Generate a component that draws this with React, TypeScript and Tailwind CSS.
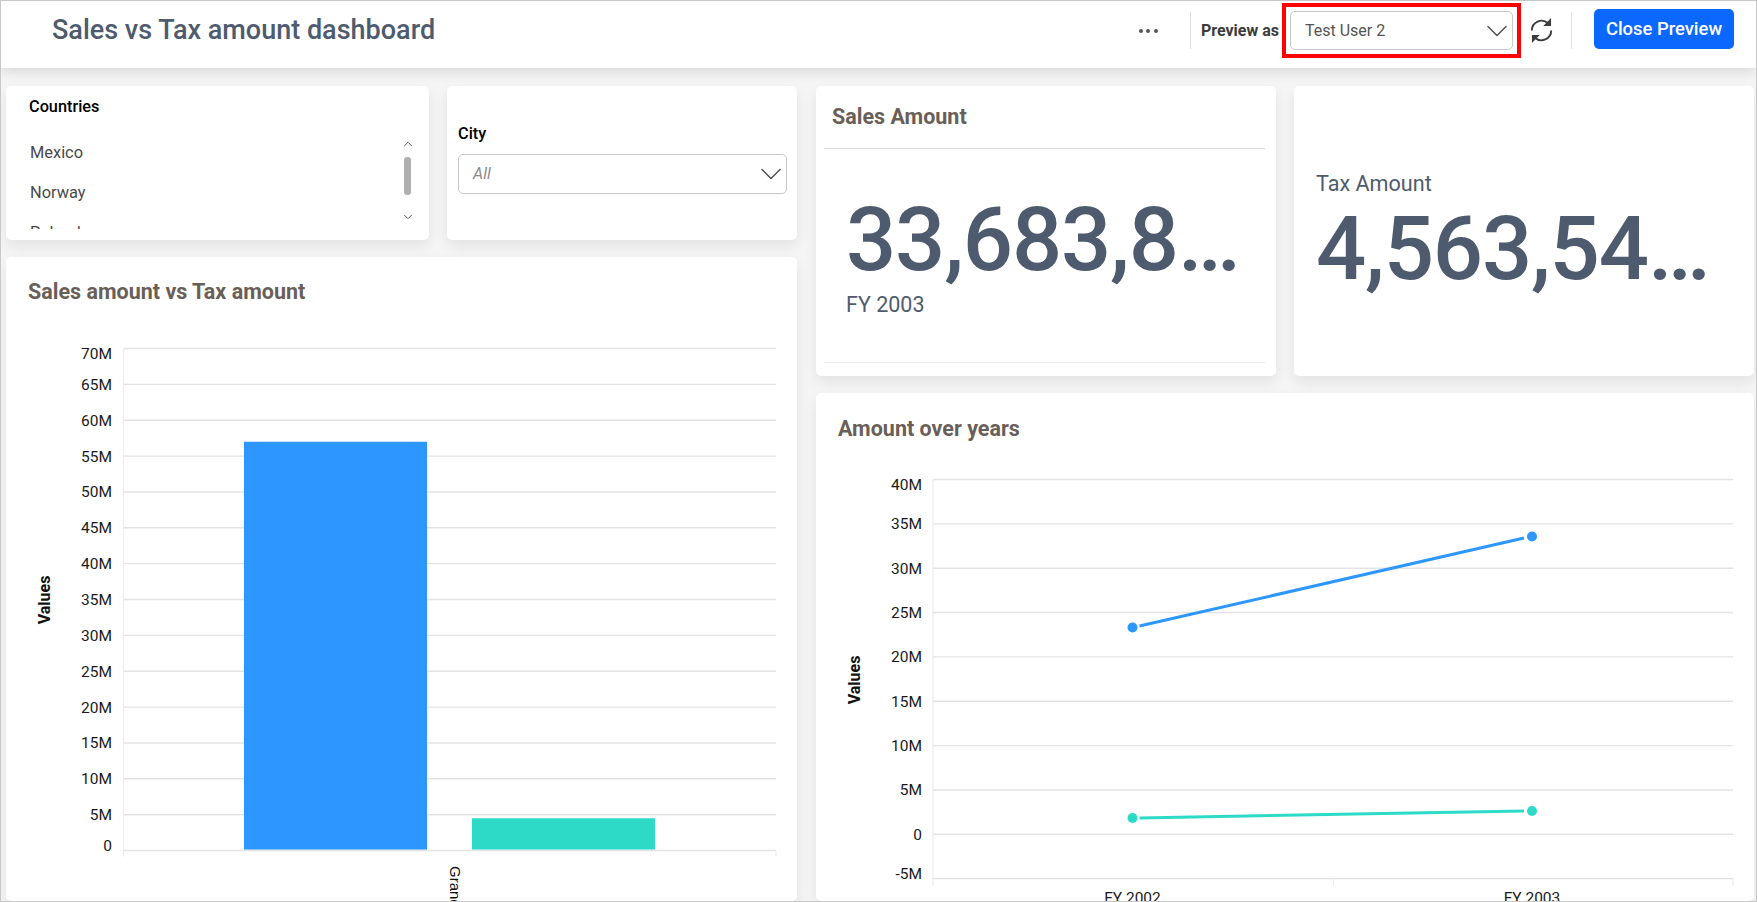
import React from 'react';
import { ChevronDown, ChevronUp } from 'lucide-react';

const BLUE = '#2d97ff';
const TEAL = '#2ddac7';
const GRID = '#e3e3e3';
const AXIS = '#ececec';

const Card: React.FC<{ className?: string; children?: React.ReactNode }> = ({ className = '', children }) => (
  <div className={`bg-white rounded-[5px] shadow-[0_6px_14px_rgba(0,0,0,0.08)] overflow-hidden ${className}`}>{children}</div>
);

const SyncIcon = () => (
  <svg width="27" height="27" viewBox="0 0 24 24" fill="none" stroke="#3c3c3c" strokeWidth="1.7">
    <path d="M3.4 12a8.6 8.6 0 0 1 14.6-6.2" />
    <path d="M20.6 12a8.6 8.6 0 0 1-14.6 6.2" />
    <path d="M20 2.2v5.2h-5.2z" fill="#3c3c3c" strokeWidth="1" />
    <path d="M4 21.8v-5.2h5.2z" fill="#3c3c3c" strokeWidth="1" />
  </svg>
);

const Select: React.FC<{ label: string; className?: string; labelClass?: string }> = ({ label, className = '', labelClass = '' }) => (
  <div className={`flex items-center justify-between bg-white border border-[#c8c8c8] rounded-[5px] ${className}`}>
    <span className={labelClass}>{label}</span>
    <ChevronDown size={36} strokeWidth={1} color="#505050" className="shrink-0 -mr-[3px]" />
  </div>
);

// first and last label stay inside the plot, the others sit on their line
const labelY = (y: number, first: boolean, last: boolean) => y + 5.5 + (first ? 4.5 : 0) - (last ? 5 : 0);

// sales vs tax bars
const BarChart = () => {
  const ticks = Array.from({ length: 15 }, (_, i) => i * 5);
  const top = 91.5;
  const step = 35.86;
  const y = (v: number) => top + (70 - v) / 5 * step;
  return (
    <svg width="791" height="645" className="block">
      <text x="-343" y="44" transform="rotate(-90)" textAnchor="middle" fontSize="16" fontWeight="700" fill="#111">Values</text>
      {ticks.map((t) => (
        <g key={t}>
          <line x1="117.5" x2="770" y1={y(t)} y2={y(t)} stroke={GRID} strokeWidth="1.4" />
          <text x="106" y={labelY(y(t), t === 70, t === 0)} textAnchor="end" fontSize="15.5" fill="#1a1a1a">{t === 0 ? '0' : `${t}M`}</text>
        </g>
      ))}
      <line x1="117.5" x2="117.5" y1={top} y2={y(0) + 6} stroke={AXIS} strokeWidth="1.2" />
      <line x1="770" x2="770" y1={y(0)} y2={y(0) + 6} stroke={AXIS} strokeWidth="1.2" />
      <rect x="238" y={y(57)} width="183" height={y(0) - y(57) - 1} fill={BLUE} />
      <rect x="466" y={y(4.5)} width="183" height={y(0) - y(4.5) - 1} fill={TEAL} />
      <text x="444" y="609" transform="rotate(90 444 609)" fontSize="15" fill="#111" style={{ fontFamily: '"Liberation Sans", sans-serif' }}>Grand Total</text>
    </svg>
  );
};

// amount per fiscal year
const LineChart = () => {
  const ticks = [40, 35, 30, 25, 20, 15, 10, 5, 0, -5];
  const y = (v: number) => 86.5 + (40 - v) / 5 * 44.35;
  return (
    <svg width="938" height="508" className="block">
      <text x="-287" y="44" transform="rotate(-90)" textAnchor="middle" fontSize="16" fontWeight="700" fill="#111">Values</text>
      {ticks.map((t) => (
        <g key={t}>
          <line x1="117" x2="917" y1={y(t)} y2={y(t)} stroke={GRID} strokeWidth="1.4" />
          <text x="106" y={labelY(y(t), t === 40, t === -5)} textAnchor="end" fontSize="15.5" fill="#1a1a1a">{t === 0 ? '0' : `${t}M`}</text>
        </g>
      ))}
      <line x1="117" x2="117" y1={y(40)} y2={y(-5) + 7} stroke={AXIS} strokeWidth="1.2" />
      <line x1="517.5" x2="517.5" y1={y(-5)} y2={y(-5) + 7} stroke={AXIS} strokeWidth="1.2" />
      <line x1="917" x2="917" y1={y(-5)} y2={y(-5) + 7} stroke={AXIS} strokeWidth="1.2" />
      <line x1="323.5" y1="233" x2="708" y2="145" stroke={BLUE} strokeWidth="3" />
      <circle cx="316.5" cy="234.5" r="5" fill={BLUE} />
      <circle cx="716" cy="143.5" r="5" fill={BLUE} />
      <line x1="323.5" y1="425" x2="708" y2="418" stroke={TEAL} strokeWidth="3" />
      <circle cx="316.5" cy="425" r="5" fill={TEAL} />
      <circle cx="716" cy="418" r="5" fill={TEAL} />
      <text x="316.5" y="510" textAnchor="middle" fontSize="15.5" fill="#1a1a1a">FY 2002</text>
      <text x="716" y="510" textAnchor="middle" fontSize="15.5" fill="#1a1a1a">FY 2003</text>
    </svg>
  );
};

const App: React.FC = () => {
  return (
    <div className="w-[1757px] h-[902px] overflow-hidden border border-[#c8c8c8] bg-[#f5f5f6] flex flex-col font-['Roboto',sans-serif]">
      {/* top bar */}
      <header className="h-[67px] shrink-0 bg-white shadow-[0_4px_12px_rgba(0,0,0,0.12)] flex items-center pl-[51px] pr-[22px] relative z-10">
        <h1 className="text-[27px] font-medium text-[#4e5b6e] -mt-[8px]">Sales vs Tax amount dashboard</h1>
        <div className="ml-auto flex items-center h-full pb-[8px]">
          <span className="flex gap-[3.5px] mr-[32px]">
            <i className="w-[4px] h-[4px] rounded-full bg-[#555]" />
            <i className="w-[4px] h-[4px] rounded-full bg-[#555]" />
            <i className="w-[4px] h-[4px] rounded-full bg-[#555]" />
          </span>
          <div className="w-px h-[37px] bg-[#dcdcdc] mr-[10px]" />
          <span className="text-[16px] font-bold text-[#3b3b3b] mr-[3px]">Preview as</span>
          <div className="border-4 border-[#ff0000] px-[4px] py-[4px] w-[239px] h-[55px]">
            <Select label="Test User 2" className="h-full pl-[14px]" labelClass="text-[16px] text-[#555]" />
          </div>
          <div className="ml-[7px] mr-[16px]"><SyncIcon /></div>
          <div className="w-px h-[37px] bg-[#e2e2e2] mr-[22px]" />
          <button className="w-[140px] h-[40px] rounded-[5px] bg-[#0a68ff] text-white text-[18.4px] font-medium -mt-[3px]">Close Preview</button>
        </div>
      </header>

      <main className="flex-1 min-h-0 flex gap-[19px] pl-[5px] pt-[18px]">
        {/* left column */}
        <div className="w-[791px] flex flex-col gap-[17px]">
          <div className="flex gap-[18px] h-[154px] shrink-0">
            <Card className="w-[423px] relative pl-[23px] pt-[9px]">
              <div className="text-[16.3px] leading-[24px] font-medium text-black">Countries</div>
              <div className="mt-[14px] h-[96px] overflow-hidden text-[16.4px] text-[#4a4a4a] pl-px">
                <div className="h-[40px] flex items-center">Mexico</div>
                <div className="h-[40px] flex items-center">Norway</div>
                <div className="h-[40px] flex items-center">Poland</div>
              </div>
              <div className="absolute right-[14.5px] top-[51px] w-[14px] flex flex-col items-center">
                <ChevronUp size={14} strokeWidth={1.6} color="#555" />
                <span className="w-[7px] h-[38px] mt-[6px] rounded-[3px] bg-[#b0b0b0]" />
                <ChevronDown size={14} strokeWidth={1.6} color="#555" className="mt-[14.5px]" />
              </div>
            </Card>
            <Card className="w-[350px] pl-[11px] pr-[10px] pt-[38px]">
              <div className="text-[16.3px] font-medium text-black leading-[20px]">City</div>
              <Select label="All" className="mt-[10px] h-[40px] pl-[14px]" labelClass="text-[16px] italic text-[#8a8a8a]" />
            </Card>
          </div>
          <Card className="flex-1 min-h-0">
            <h2 className="text-[21.5px] font-bold text-[#6a5f58] pl-[22px] pt-[22px] leading-[26px] mb-[-48px]">Sales amount vs Tax amount</h2>
            <BarChart />
          </Card>
        </div>

        {/* right column */}
        <div className="w-[938px] flex flex-col gap-[17px]">
          <div className="flex gap-[18px] h-[290px] shrink-0">
            <Card className="w-[460px] flex flex-col pl-[8px] pr-[11px]">
              <div className="h-[63px] border-b border-[#d9d9d9] pl-[8px] pt-[18px] text-[21.5px] font-bold text-[#6a5f58] leading-[26px] shrink-0">Sales Amount</div>
              <div className="flex-1 border-b border-[#ececec] mb-[13px] pl-[22px] pt-[39px]">
                <div className="text-[88.5px] font-medium tracking-[-1.2px] leading-[105px] text-[#4e5b6e] truncate">33,683,816.00</div>
                <div className="text-[21.5px] text-[#4e5b6e] leading-[26px] -mt-[1px]">FY 2003</div>
              </div>
            </Card>
            <Card className="w-[460px] pl-[22px] pr-[16px] pt-[85px]">
              <div className="text-[21.6px] text-[#4e5b6e] leading-[26px]">Tax Amount</div>
              <div className="text-[88.5px] font-medium tracking-[-1.2px] leading-[105px] text-[#4e5b6e] truncate">4,563,541.00</div>
            </Card>
          </div>
          <Card className="flex-1 min-h-0">
            <h2 className="text-[21.5px] font-bold text-[#6a5f58] pl-[22px] pt-[23px] leading-[26px] mb-[-49px]">Amount over years</h2>
            <LineChart />
          </Card>
        </div>
      </main>
    </div>
  );
};

export default App;
